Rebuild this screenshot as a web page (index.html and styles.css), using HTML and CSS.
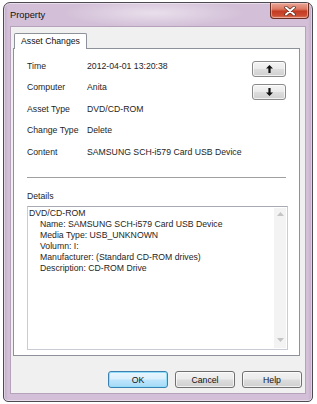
FILE: index.html
```html
<!DOCTYPE html>
<html>
<head>
<meta charset="utf-8">
<link rel="stylesheet" href="styles.css">
</head>
<body>
<div class="window">
  <div class="titlebar">
    <span class="title">Property</span>
    <div class="close">
      <svg width="12" height="10" viewBox="0 0 12 10"><path d="M2 1.5 L10 8.5 M10 1.5 L2 8.5" stroke="#5a2a20" stroke-width="3.4" stroke-linecap="round"/><path d="M2 1.5 L10 8.5 M10 1.5 L2 8.5" stroke="#fff" stroke-width="2" stroke-linecap="round"/></svg>
    </div>
  </div>
  <div class="client">
    <div class="tabs">
      <div class="tab">Asset Changes</div>
    </div>
    <div class="panel">
      <div class="top">
        <div class="fields">
          <div class="row"><span class="label">Time</span><span>2012-04-01 13:20:38</span></div>
          <div class="row"><span class="label">Computer</span><span>Anita</span></div>
          <div class="row"><span class="label">Asset Type</span><span>DVD/CD-ROM</span></div>
          <div class="row"><span class="label">Change Type</span><span>Delete</span></div>
          <div class="row"><span class="label">Content</span><span>SAMSUNG SCH-i579 Card USB Device</span></div>
        </div>
        <div class="nav">
          <div class="navbtn"><svg width="7" height="8" viewBox="0 0 7 8"><path d="M3.5 0 L7 3.6 L4.6 3.6 L4.6 8 L2.4 8 L2.4 3.6 L0 3.6 Z" fill="#111"/></svg></div>
          <div class="navbtn"><svg width="7" height="8" viewBox="0 0 7 8"><path d="M3.5 8 L7 4.4 L4.6 4.4 L4.6 0 L2.4 0 L2.4 4.4 L0 4.4 Z" fill="#111"/></svg></div>
        </div>
      </div>
      <div class="sep"></div>
      <div class="details-label">Details</div>
      <div class="textbox">
        <div class="text">
          <div>DVD/CD-ROM</div>
          <div class="ind">Name: SAMSUNG SCH-i579 Card USB Device</div>
          <div class="ind">Media Type: USB_UNKNOWN</div>
          <div class="ind">Volumn: I:</div>
          <div class="ind">Manufacturer: (Standard CD-ROM drives)</div>
          <div class="ind">Description: CD-ROM Drive</div>
        </div>
        <div class="scroll">
          <svg width="7" height="4" viewBox="0 0 7 4"><path d="M0 4 L3.5 0 L7 4 Z" fill="#c4c4c4"/></svg>
          <svg width="7" height="4" viewBox="0 0 7 4"><path d="M0 0 L3.5 4 L7 0 Z" fill="#c4c4c4"/></svg>
        </div>
      </div>
    </div>
    <div class="buttons">
      <div class="btn default">OK</div>
      <div class="btn">Cancel</div>
      <div class="btn">Help</div>
    </div>
  </div>
</div>
</body>
</html>
```

FILE: styles.css
```css
html, body {
  margin: 0;
  padding: 0;
  background: #fff;
}
body {
  font-family: "Liberation Sans", Arial, sans-serif;
  font-size: 8.7px;
  color: #1e1e1e;
}
.window {
  box-sizing: border-box;
  margin: 2px 0 0 3px;
  width: 310px;
  height: 400px;
  border: 1px solid #4e4a52;
  border-radius: 7px 7px 5px 5px;
  background:
    radial-gradient(ellipse 90px 14px at 150px 10px, rgba(255,255,255,0.5), rgba(255,255,255,0) 100%),
    linear-gradient(to right, #c2a9c8 0px, #d3c0d8 4px, #d3c0d8 calc(100% - 4px), #c2a9c8 100%);
  box-shadow: inset 0 0 0 1px rgba(255,255,255,0.45);
  padding: 0 6px 7px 6px;
  display: flex;
  flex-direction: column;
}
.titlebar {
  height: 24px;
  display: flex;
  align-items: flex-start;
  justify-content: space-between;
}
.title {
  margin-top: 7px;
  font-size: 9.3px;
  color: #111;
}
.close {
  width: 39px;
  height: 16px;
  margin: 0 -3px 0 0;
  box-sizing: border-box;
  border: 1px solid #6a2e22;
  border-top: none;
  border-radius: 0 0 4px 4px;
  background: linear-gradient(to bottom, #e9a797 0%, #dc7a63 40%, #c33c22 55%, #cc4d33 85%, #e0836a 100%);
  box-shadow: inset 0 0 0 1px rgba(255,220,210,0.5);
  display: flex;
  align-items: center;
  justify-content: center;
}
.client {
  flex: 1;
  box-sizing: border-box;
  background: #f0f0f0;
  border: 1px solid #b7a2bc;
  padding: 5px 3px 5px 2px;
  display: flex;
  flex-direction: column;
}
.tabs {
  display: flex;
  padding-left: 1px;
}
.tab {
  height: 16px;
  box-sizing: border-box;
  padding: 0 6px;
  border: 1px solid #8d919a;
  border-bottom: none;
  border-radius: 2px 2px 0 0;
  background: #fff;
  line-height: 15px;
  position: relative;
  top: 1px;
  color: #111;
}
.panel {
  box-sizing: border-box;
  height: 308px;
  margin-right: 2px;
  background: #fff;
  border: 1px solid #8d919a;
  padding: 6px 13px 5px 13px;
  display: flex;
  flex-direction: column;
}
.top {
  display: flex;
  justify-content: space-between;
}
.row {
  height: 21.5px;
  display: flex;
  align-items: center;
}
.label {
  width: 60px;
  flex: none;
}
.nav {
  display: flex;
  flex-direction: column;
  gap: 7px;
  padding-top: 6px;
}
.navbtn {
  width: 34px;
  height: 16px;
  box-sizing: border-box;
  border: 1px solid #8a8a8a;
  border-radius: 3px;
  background: linear-gradient(to bottom, #f4f4f4 0%, #ebebeb 48%, #dddddd 52%, #d0d0d0 100%);
  box-shadow: inset 0 0 0 1px rgba(255,255,255,0.7);
  display: flex;
  align-items: center;
  justify-content: center;
}
.sep {
  height: 1px;
  background: #a0a0a0;
  margin: 14px 0 0 0;
  border-bottom: 1px solid #fff;
}
.details-label {
  height: 27px;
  line-height: 34px;
}
.textbox {
  flex: 1;
  box-sizing: border-box;
  margin: 0 -2px 0 0;
  border: 1px solid #c9ccd2;
  border-top-color: #a7aab0;
  display: flex;
}
.text {
  flex: 1;
  padding: 1px 0 0 1px;
  line-height: 11px;
  white-space: nowrap;
}
.ind {
  padding-left: 11px;
}
.scroll {
  width: 12px;
  margin: 1px 1px 1px 0;
  background: #f3f3f3;
  display: flex;
  flex-direction: column;
  align-items: center;
  justify-content: space-between;
  padding: 4px 0 6px 0;
}
.buttons {
  display: flex;
  justify-content: flex-end;
  gap: 7px;
  margin-top: 15px;
}
.btn {
  width: 60px;
  height: 17px;
  box-sizing: border-box;
  border: 1px solid #707070;
  border-radius: 3px;
  background: linear-gradient(to bottom, #f2f2f2 0%, #ebebeb 48%, #dddddd 52%, #cfcfcf 100%);
  box-shadow: inset 0 0 0 1px rgba(255,255,255,0.7);
  display: flex;
  align-items: center;
  justify-content: center;
  color: #111;
}
.btn.default {
  border-color: #3c7fb1;
  background: linear-gradient(to bottom, #eaf6fd 0%, #d9f0fc 48%, #bee6fd 52%, #a7d9f5 100%);
  box-shadow: inset 0 0 0 1px #90dff9;
}
```
